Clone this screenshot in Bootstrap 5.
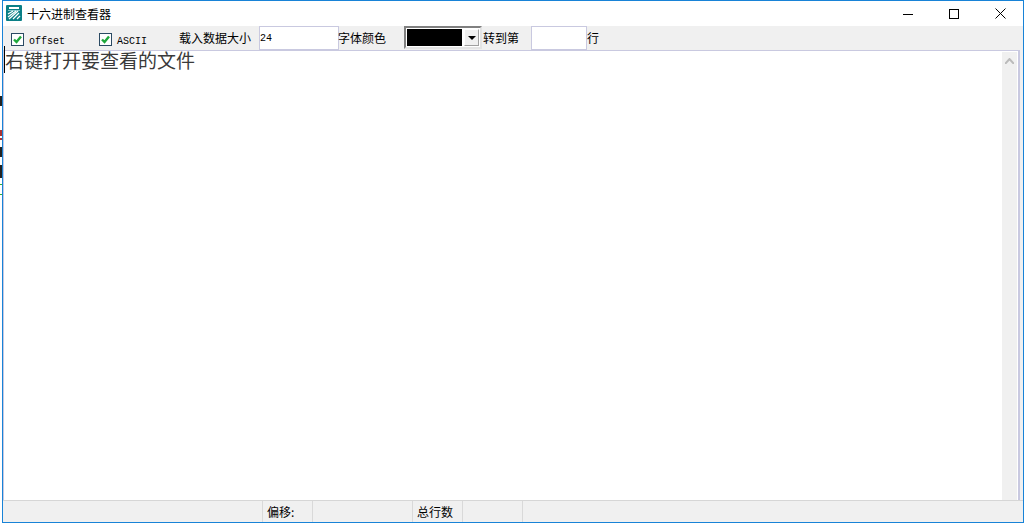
<!DOCTYPE html>
<html lang="zh">
<head>
<meta charset="utf-8">
<title>十六进制查看器</title>
<link href="https://cdn.jsdelivr.net/npm/bootstrap@5.3.0/dist/css/bootstrap.min.css" rel="stylesheet">
<style>
html,body{height:100%;background:#fff;overflow:hidden}
body{font-family:"Noto Sans CJK SC","Liberation Sans",sans-serif;font-size:12px;line-height:1;color:#000}
.desk{width:1024px;height:523px}
.behind{width:2px;flex:none}
.behind svg{display:block}
.win{flex:1;min-width:0;border:1px solid #1883d7;background:#f0f0f0}
.titlebar{height:25px;background:#fff;flex:none;padding-left:3px}
.appname{margin-left:5px;font-size:12px}
.appico{display:block;margin-top:-2px}
.capbtns{margin-left:auto}
.capbtn{width:46px;height:25px;background:none;border:0;padding:0;display:flex;align-items:center;justify-content:center}
.toolbar{height:24px;flex:none;background:#f0f0f0;padding-left:8px}
.tick{width:13px;height:13px;flex:none;display:block;margin-top:2px}
.latin{font-family:"Liberation Mono",monospace;font-size:10px;margin-left:5px;margin-top:7px}
.gap1{margin-left:34px}
.gap2{margin-left:32px}
.lbl{font-size:12px;white-space:nowrap}
.lblback{margin-left:-1px}
.lbltight{margin-left:1px}
.field{height:24px;background:#fff;border:1px solid #c9c9e0;font-family:"Liberation Mono",monospace;font-size:10px;padding:0;border-radius:0;outline:0;color:#000}
.fieldsize{width:80px;margin-left:8px}
.fieldgo{width:56px;margin-left:12px}
.combo{width:78px;height:23px;margin-left:18px;border:2px solid;border-color:#808080 #e4e4e4 #e4e4e4 #808080;background:#fff;padding:1px}
.swatch{width:55px;height:100%;background:#000;flex:none}
.drop{flex:1;margin-left:2px;background:#f0f0f0;display:flex;align-items:center;justify-content:center;border:1px solid;border-color:#fff #a0a0a0 #a0a0a0 #fff}
.editor{flex:1;min-height:0;background:#fff;border:solid #c9c9e0;border-width:1px 2px 0 1px;margin-right:3px}
.doc{flex:1;font-family:"Noto Sans CJK SC",serif;font-size:19px;line-height:17px;color:#3a3a3a}
.caret{box-shadow:inset 1px 0 0 #000;padding-left:1px}
.vbar{width:15px;flex:none;background:#f0f0f0;padding-top:6px;margin:1px 1px 0 0}
.vbar svg{display:block;margin:0 auto}
.statusbar{height:22px;flex:none;background:#f0f0f0;border-top:1px solid #d6d6d6}
.cell{height:100%;border-right:1px solid #d9d9d9;padding-left:4px;font-size:12px;display:flex;align-items:center;flex:none}
.c0{width:260px}.c1{width:50px}.c2{width:100px}.c3{width:50px}.c4{width:60px}
</style>
</head>
<body>
<div class="desk d-flex">
  <div class="behind">
    <svg width="2" height="523" aria-hidden="true">
      <rect x="0" y="96" width="2" height="10" fill="#222"/>
      <rect x="0" y="130" width="2" height="6" fill="#a33"/>
      <rect x="0" y="138" width="2" height="2" fill="#a33"/>
      <rect x="0" y="147" width="2" height="10" fill="#222"/>
      <rect x="0" y="165" width="2" height="13" fill="#222"/>
      <rect x="0" y="184" width="2" height="1" fill="#3a3"/>
      <rect x="0" y="194" width="2" height="1" fill="#3a3"/>
    </svg>
  </div>
  <div class="win d-flex flex-column">
    <div class="titlebar d-flex align-items-center">
      <svg class="appico" width="16" height="16" viewBox="0 0 16 16" aria-hidden="true">
        <rect x="0" y="0" width="16" height="16" rx="1" fill="#0a7f86"/>
        <rect x="3" y="2" width="10" height="2" fill="#fff"/>
        <rect x="2" y="5" width="12" height="1" fill="#7fc4c8"/>
        <path d="M2 9l5-3M2 12l8-6M3 14l9-8M7 14l6-6M11 14l3-3" stroke="#fff" stroke-width="1.2" fill="none"/>
      </svg>
      <span class="appname">十六进制查看器</span>
      <div class="capbtns d-flex">
        <button class="capbtn" aria-label="最小化"><svg width="10" height="10" aria-hidden="true"><rect x="0" y="5" width="10" height="1"/></svg></button>
        <button class="capbtn" aria-label="最大化"><svg width="10" height="10" aria-hidden="true"><rect x=".5" y=".5" width="9" height="9" fill="none" stroke="#000"/></svg></button>
        <button class="capbtn" aria-label="关闭"><svg width="11" height="11" aria-hidden="true"><path d="M.5.5l10 10M10.5.5l-10 10" stroke="#000" fill="none"/></svg></button>
      </div>
    </div>
    <div class="toolbar d-flex align-items-center">
      <svg class="tick" viewBox="0 0 13 13" aria-hidden="true"><rect x=".5" y=".5" width="12" height="12" fill="#fff" stroke="#2b4a63"/><path d="M3 6.5l2.5 2.5 4.5-5.5" stroke="#1fa83c" stroke-width="2.4" fill="none"/></svg>
      <span class="latin">offset</span>
      <svg class="tick gap1" viewBox="0 0 13 13" aria-hidden="true"><rect x=".5" y=".5" width="12" height="12" fill="#fff" stroke="#2b4a63"/><path d="M3 6.5l2.5 2.5 4.5-5.5" stroke="#1fa83c" stroke-width="2.4" fill="none"/></svg>
      <span class="latin">ASCII</span>
      <span class="lbl gap2">载入数据大小</span>
      <input class="field fieldsize" type="text" value="24" aria-label="载入数据大小">
      <span class="lbl lblback">字体颜色</span>
      <div class="combo d-flex align-self-start">
        <div class="swatch"></div>
        <div class="drop"><svg width="8" height="4" aria-hidden="true"><path d="M0 0h8L4 4z"/></svg></div>
      </div>
      <span class="lbl lbltight">转到第</span>
      <input class="field fieldgo" type="text" aria-label="转到第">
      <span class="lbl">行</span>
    </div>
    <div class="editor d-flex">
      <div class="doc"><span class="caret">右键打开要查看的文件</span></div>
      <div class="vbar"><svg width="9" height="6" aria-hidden="true"><path d="M0 6l4.5-5L9 6" fill="none" stroke="#bbb" stroke-width="2"/></svg></div>
    </div>
    <div class="statusbar d-flex">
      <div class="cell c0"></div>
      <div class="cell c1">偏移:</div>
      <div class="cell c2"></div>
      <div class="cell c3">总行数</div>
      <div class="cell c4"></div>
    </div>
  </div>
</div>
<script src="https://cdn.jsdelivr.net/npm/bootstrap@5.3.0/dist/js/bootstrap.bundle.min.js"></script>
</body>
</html>
